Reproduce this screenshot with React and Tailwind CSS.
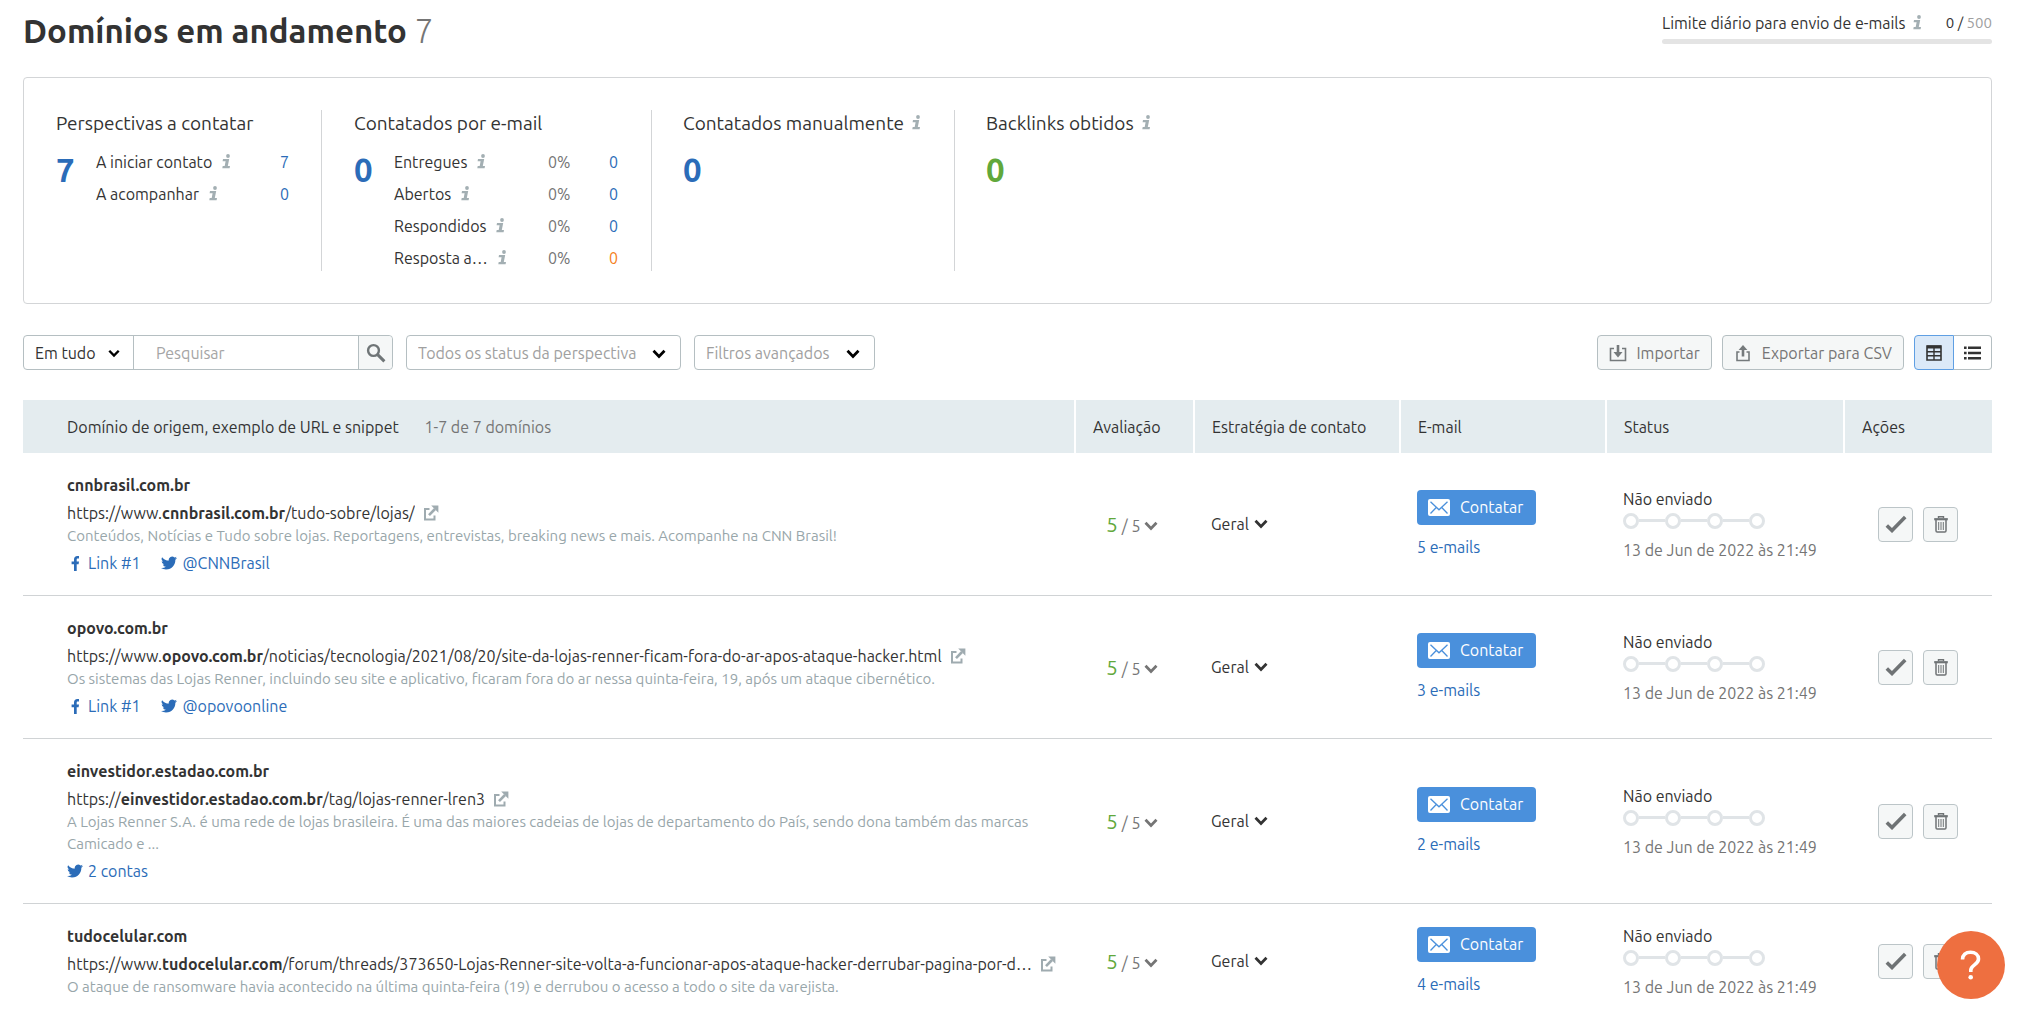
import React, { useState } from 'react';

const summaryContacts = [
    { label: 'A iniciar contato', value: 7 },
    { label: 'A acompanhar', value: 0 },
];

const summaryEmails = [
    { label: 'Entregues', percent: '0%', value: 0 },
    { label: 'Abertos', percent: '0%', value: 0 },
    { label: 'Respondidos', percent: '0%', value: 0 },
    { label: 'Resposta a…', percent: '0%', value: 0, warning: true },
];

const prospects = [
    {
        domain: 'cnnbrasil.com.br',
        prefix: 'https://www.',
        path: '/tudo-sobre/lojas/',
        snippet: 'Conteúdos, Notícias e Tudo sobre lojas. Reportagens, entrevistas, breaking news e mais. Acompanhe na CNN Brasil!',
        facebook: 'Link #1',
        twitter: '@CNNBrasil',
        emails: 5,
    },
    {
        domain: 'opovo.com.br',
        prefix: 'https://www.',
        path: '/noticias/tecnologia/2021/08/20/site-da-lojas-renner-ficam-fora-do-ar-apos-ataque-hacker.html',
        snippet: 'Os sistemas das Lojas Renner, incluindo seu site e aplicativo, ficaram fora do ar nessa quinta-feira, 19, após um ataque cibernético.',
        facebook: 'Link #1',
        twitter: '@opovoonline',
        emails: 3,
    },
    {
        domain: 'einvestidor.estadao.com.br',
        prefix: 'https://',
        path: '/tag/lojas-renner-lren3',
        snippet: 'A Lojas Renner S.A. é uma rede de lojas brasileira. É uma das maiores cadeias de lojas de departamento do País, sendo dona também das marcas Camicado e ...',
        twitter: '2 contas',
        emails: 2,
    },
    {
        domain: 'tudocelular.com',
        prefix: 'https://www.',
        path: '/forum/threads/373650-Lojas-Renner-site-volta-a-funcionar-apos-ataque-hacker-derrubar-pagina-por-d…',
        snippet: 'O ataque de ransomware havia acontecido na última quinta-feira (19) e derrubou o acesso a todo o site da varejista.',
        emails: 4,
    },
];

const InfoIcon = () => (
    <svg viewBox='0 0 9 16' className='h-4 w-[9px] shrink-0 fill-[#a3afb3]' aria-hidden='true'>
        <circle cx='6' cy='2' r='1.9' />
        <path d='M1 5h6.200L5.800 12H8l-.4 2.200H.3L.7 12h2l.9-4.800H.6z' />
    </svg>
);

const Chevron = ({ className }) => (
    <svg viewBox='0 0 14 10' className={className} fill='none' stroke='currentColor' strokeWidth='2.8' aria-hidden='true'>
        <path d='M1.5 1.8 7 7.4l5.5-5.6' />
    </svg>
);

const SearchIcon = () => (
    <svg viewBox='0 0 20 20' className='h-5 w-5' fill='none' stroke='#6f7577' aria-hidden='true'>
        <circle cx='7.5' cy='7.5' r='5.4' strokeWidth='2.4' />
        <path d='m11.6 11.6 6.8 6.8' strokeWidth='3' />
    </svg>
);

const ImportIcon = () => (
    <svg viewBox='0 0 18 18' className='h-[18px] w-[18px]' fill='none' stroke='#757a7c' strokeWidth='1.6' aria-hidden='true'>
        <path d='M5 4.5H1.5v12h15v-12H13' />
        <path d='M9 1v8' strokeWidth='2.6' />
        <path d='M4.5 8h9L9 13.4z' fill='#757a7c' stroke='none' />
    </svg>
);

const ExportIcon = () => (
    <svg viewBox='0 0 18 18' className='h-[18px] w-[18px]' fill='none' stroke='#757a7c' strokeWidth='1.6' aria-hidden='true'>
        <path d='M5.5 8H3v8.5h12V8h-2.5' />
        <path d='M9 12.5V5' strokeWidth='2.6' />
        <path d='M4.6 6h8.800L9 1z' fill='#757a7c' stroke='none' />
    </svg>
);

const TableIcon = () => (
    <svg viewBox='0 0 16 16' className='h-4 w-4' aria-hidden='true'>
        <path d='M1 1h14v14H1z' fill='none' stroke='#333' strokeWidth='1.6' />
        <path d='M1 2h14' stroke='#333' strokeWidth='3' />
        <path d='M1 6.8h14M1 10.8h14M8 3v12' stroke='#333' strokeWidth='1.4' />
    </svg>
);

const ListIcon = () => (
    <svg viewBox='0 0 17 14' className='h-[14px] w-[17px]' stroke='#333' strokeWidth='2.6' aria-hidden='true'>
        <path d='M0 1.8h2.6M4 1.8h13M0 7h2.6M4 7h13M0 12.2h2.6M4 12.2h13' />
    </svg>
);

const ExternalIcon = () => (
    <svg viewBox='0 0 16 16' className='h-4 w-4' fill='none' stroke='#9fabb0' strokeWidth='2' aria-hidden='true'>
        <path d='M6.5 4H2v10.5h9.5V10.5' />
        <path d='M6 10.2 12 4' strokeWidth='2.6' />
        <path d='M8.2.6h7.2v7.2z' fill='#9fabb0' stroke='none' />
    </svg>
);

const FacebookIcon = () => (
    <svg viewBox='0 0 16 16' className='h-4 w-4 fill-[#2b6cb8]' aria-hidden='true'>
        <path d='M7 16V9.200H4.600V6.600H7V4.700C7 2.300 8.300 1 10.400 1c.7 0 1.300 0 1.600.1v2.400h-1.200C9.900 3.500 9.700 4 9.700 4.800v1.800h2.300l-.4 2.600H9.700V16z' />
    </svg>
);

const TwitterIcon = () => (
    <svg viewBox='0 0 24 24' className='h-4 w-4 fill-[#2b6cb8]' aria-hidden='true'>
        <path d='M24 4.6a10 10 0 0 1-2.800.8 5 5 0 0 0 2.100-2.700 10 10 0 0 1-3.100 1.200 4.900 4.900 0 0 0-8.400 4.500A14 14 0 0 1 1.700 3.200a4.900 4.900 0 0 0 1.500 6.600 4.900 4.900 0 0 1-2.200-.6v.1a4.900 4.900 0 0 0 3.900 4.800 5 5 0 0 1-2.200.1 4.900 4.900 0 0 0 4.600 3.400A9.900 9.900 0 0 1 0 19.500a14 14 0 0 0 7.500 2.200c9.100 0 14-7.500 14-14v-.6A10 10 0 0 0 24 4.600z' />
    </svg>
);

const MailIcon = () => (
    <svg viewBox='0 0 22 17' className='h-[17px] w-[22px]' aria-hidden='true'>
        <rect width='22' height='17' rx='2' fill='#fff' />
        <path d='m2.500 2.800 8.500 8 8.500-8M2.500 14.500l5.500-5.800M19.500 14.500 14 8.700' fill='none' stroke='#4a90dc' strokeWidth='1.300' />
    </svg>
);

const CheckIcon = () => (
    <svg viewBox='0 0 22 18' className='h-[18px] w-[22px]' fill='none' stroke='#6f7375' strokeWidth='3.600' aria-hidden='true'>
        <path d='m1.800 10.500 5.200 5L20.200 2' />
    </svg>
);

const TrashIcon = () => (
    <svg viewBox='0 0 14 17' className='h-[17px] w-[14px]' fill='none' stroke='#6f7375' aria-hidden='true'>
        <path d='M.2 3.200h13.600' strokeWidth='2.200' />
        <path d='M4.500 2V.8h5V2' strokeWidth='1.400' />
        <path d='M2 4v10.800c0 .8.400 1.300 1.200 1.300h7.600c.8 0 1.200-.5 1.200-1.300V4' strokeWidth='1.500' />
        <path d='M4.700 6v8M7 6v8M9.300 6v8' strokeWidth='1' />
    </svg>
);

const HelpIcon = () => (
    <svg viewBox='0 0 22 30' className='h-[30px] w-[22px]' fill='none' stroke='#fff' strokeWidth='3.600' aria-hidden='true'>
        <path d='M2.500 9.500C2.500 5 5.800 2.300 10.500 2.300s8 2.700 8 6.700c0 5.600-7.700 6-7.700 11v2' />
        <circle cx='10.700' cy='27.200' r='2.300' fill='#fff' stroke='none' />
    </svg>
);

const StatusSteps = () => (
    <div className='mt-[2px] flex w-[142px] items-center'>
        {[0, 1, 2, 3].map((step) => (
            <React.Fragment key={step}>
                {step > 0 && <span className='h-[3px] flex-1 bg-[#e0e4e7]'></span>}
                <span className='h-4 w-4 rounded-full border-[3px] border-[#e0e4e7]'></span>
            </React.Fragment>
        ))}
    </div>
);

const Row = ({ item }) => (
    <tr className='border-b border-[#d0d3d5]'>
        <td className='py-5 pr-4 pl-[44px] align-top'>
            <div className='font-bold leading-6'>{item.domain}</div>
            <div className='mt-1 flex items-center gap-2 leading-6'>
                <span className='truncate'>{item.prefix}<b>{item.domain}</b>{item.path}</span>
                <a href='#' aria-label={`Abrir ${item.domain}`} className='shrink-0'><ExternalIcon /></a>
            </div>
            <p className='max-w-[980px] text-[15px] leading-[22px] text-[#98a6aa]'>{item.snippet}</p>
            {item.twitter && (
                <div className='mt-1 flex gap-[21px] leading-6 text-[#2b6cb8]'>
                    {item.facebook && <a href='#' className='flex items-center gap-[5px]'><FacebookIcon />{item.facebook}</a>}
                    <a href='#' className='flex items-center gap-[5px]'><TwitterIcon />{item.twitter}</a>
                </div>
            )}
        </td>
        <td>
            <button type='button' className='ml-[31px] flex items-center gap-1 text-[#757575]'>
                <span className='text-[21px] leading-6 text-[#61a83b]'>5</span>
                <span className='pt-[3px]'>/ 5</span>
                <Chevron className='mt-1 h-[10px] w-[14px]' />
            </button>
        </td>
        <td className='pl-[17px]'>
            <div className='relative w-[57px]'>
                <select aria-label='Estratégia de contato' className='w-full appearance-none bg-transparent leading-6'>
                    <option>Geral</option>
                </select>
                <Chevron className='pointer-events-none absolute top-[7px] right-0 h-[10px] w-[14px]' />
            </div>
        </td>
        <td className='pl-[17px]'>
            <button type='button' className='flex h-[35px] w-[119px] items-center gap-[10px] rounded bg-[#4a90dc] pl-[11px] text-white'>
                <MailIcon />Contatar
            </button>
            <a href='#' className='mt-[10px] block leading-6 text-[#2b6cb8]'>{item.emails} e-mails</a>
        </td>
        <td className='pl-[17px]'>
            <div className='leading-6'>Não enviado</div>
            <StatusSteps />
            <div className='mt-[9px] leading-6 text-[#757575]'>13 de Jun de 2022 às 21:49</div>
        </td>
        <td className='pl-[34px]'>
            <div className='flex gap-[10px]'>
                <button type='button' aria-label='Concluir' className='flex h-[35px] w-[35px] items-center justify-center rounded border border-[#bcc5c8] bg-[#f5f7f7]'><CheckIcon /></button>
                <button type='button' aria-label='Excluir' className='flex h-[35px] w-[35px] items-center justify-center rounded border border-[#bcc5c8] bg-[#f5f7f7]'><TrashIcon /></button>
            </div>
        </td>
    </tr>
);

export const App = () => {

    const [search, setSearch] = useState('');
    const [view, setView] = useState('table');

    return (
        <div className="bg-white pr-7 pl-[23px] font-['Ubuntu','Noto_Sans',sans-serif] text-[16px] text-[#333]">
            <header className='flex items-start justify-between'>
                <h1 className='pt-[11px] text-[33px] leading-10 font-bold'>
                    Domínios em andamento <span className='font-light text-[#757575]'>7</span>
                </h1>
                <div className='w-[330px] pt-[11px]'>
                    <div className='flex items-center leading-6'>
                        <span>Limite diário para envio de e-mails</span>
                        <span className='ml-2'><InfoIcon /></span>
                        <span className='ml-auto text-[15px]'>0 / <span className='text-[#a0a0a0]'>500</span></span>
                    </div>
                    <div className='mt-1 h-[5px] rounded-full bg-[#e4e4e4]'></div>
                </div>
            </header>

            <section className='mt-[26px] flex rounded border border-[#d3d5d7] py-8'>
                <div className='h-[161px] w-[298px] border-r border-[#d3d5d7] pl-8'>
                    <h2 className='text-[19px] leading-[26px]'>Perspectivas a contatar</h2>
                    <div className='mt-[10px] flex'>
                        <a href='#' className='w-10 pt-1 text-[33px] leading-10 font-bold text-[#2b6cb8]'>7</a>
                        <ul className='w-[193px]'>
                            {summaryContacts.map((item) => (
                                <li key={item.label} className='flex h-8 items-center gap-[10px]'>
                                    <span>{item.label}</span>
                                    <InfoIcon />
                                    <a href='#' className='ml-auto text-[#2b6cb8]'>{item.value}</a>
                                </li>
                            ))}
                        </ul>
                    </div>
                </div>
                <div className='h-[161px] w-[330px] border-r border-[#d3d5d7] pl-8'>
                    <h2 className='text-[19px] leading-[26px]'>Contatados por e-mail</h2>
                    <div className='mt-[10px] flex'>
                        <a href='#' className='w-10 pt-1 text-[33px] leading-10 font-bold text-[#2b6cb8]'>0</a>
                        <ul className='w-[224px]'>
                            {summaryEmails.map((item) => (
                                <li key={item.label} className='flex h-8 items-center'>
                                    <span className='flex flex-1 items-center gap-[10px]'>{item.label}<InfoIcon /></span>
                                    <span className='w-[61px] text-[#757575]'>{item.percent}</span>
                                    <a href='#' className={item.warning ? 'text-[#f58020]' : 'text-[#2b6cb8]'}>{item.value}</a>
                                </li>
                            ))}
                        </ul>
                    </div>
                </div>
                <div className='h-[161px] w-[303px] border-r border-[#d3d5d7] pl-[31px]'>
                    <h2 className='flex items-center gap-2 text-[19px] leading-[26px]'>Contatados manualmente <InfoIcon /></h2>
                    <a href='#' className='mt-[14px] block text-[33px] leading-10 font-bold text-[#2b6cb8]'>0</a>
                </div>
                <div className='pl-[31px]'>
                    <h2 className='flex items-center gap-2 text-[19px] leading-[26px]'>Backlinks obtidos <InfoIcon /></h2>
                    <a href='#' className='mt-[14px] block text-[33px] leading-10 font-bold text-[#61a83b]'>0</a>
                </div>
            </section>

            <div className='mt-[31px] flex h-[35px] items-stretch'>
                <div className='flex w-[370px] rounded border border-[#b5bfc2]'>
                    <div className='relative w-[110px] border-r border-[#b5bfc2]'>
                        <select aria-label='Pesquisar em' className='h-full w-full appearance-none bg-transparent pl-[11px]'>
                            <option>Em tudo</option>
                        </select>
                        <Chevron className='pointer-events-none absolute top-[13px] right-[13px] h-[9px] w-[12px] text-black' />
                    </div>
                    <input
                        type='text'
                        aria-label='Pesquisar'
                        placeholder='Pesquisar'
                        value={search}
                        onChange={(e) => setSearch(e.target.value)}
                        className='min-w-0 flex-1 pl-[22px] placeholder:text-[#a5a5a5]'
                    />
                    <button type='button' aria-label='Buscar' className='flex w-[34px] items-center justify-center rounded-r border-l border-[#b5bfc2] bg-[#f5f7f7]'><SearchIcon /></button>
                </div>
                <div className='relative ml-[13px] w-[275px]'>
                    <select aria-label='Status da perspectiva' className='h-full w-full appearance-none rounded border border-[#b5bfc2] bg-white pl-[11px] text-[#a0a0a0]'>
                        <option>Todos os status da perspectiva</option>
                    </select>
                    <Chevron className='pointer-events-none absolute top-[14px] right-[15px] h-[10px] w-[14px] text-black' />
                </div>
                <div className='relative ml-[13px] w-[181px]'>
                    <select aria-label='Filtros avançados' className='h-full w-full appearance-none rounded border border-[#b5bfc2] bg-white pl-[11px] text-[#a0a0a0]'>
                        <option>Filtros avançados</option>
                    </select>
                    <Chevron className='pointer-events-none absolute top-[14px] right-[15px] h-[10px] w-[14px] text-black' />
                </div>
                <button type='button' className='ml-auto flex items-center gap-[10px] rounded border border-[#b5bfc2] bg-[#f5f7f7] px-[11px] text-[#757575]'>
                    <ImportIcon />Importar
                </button>
                <button type='button' className='ml-[10px] flex items-center gap-[10px] rounded border border-[#b5bfc2] bg-[#f5f7f7] px-[11px] text-[#757575]'>
                    <ExportIcon />Exportar para CSV
                </button>
                <button type='button' aria-label='Tabela' aria-pressed={view === 'table'} onClick={() => setView('table')} className='ml-[10px] flex w-10 items-center justify-center rounded-l border border-[#5f9fe3] bg-[#dbe9f8]'><TableIcon /></button>
                <button type='button' aria-label='Lista' aria-pressed={view === 'list'} onClick={() => setView('list')} className='flex w-[38px] items-center justify-center rounded-r border border-l-0 border-[#b5bfc2] bg-white'><ListIcon /></button>
            </div>

            <table className='mt-[30px] w-full table-fixed text-left'>
                <thead>
                    <tr className='h-[53px] bg-[#e4ecef]'>
                        <th className='border-r-2 border-white pl-[44px] font-normal'>
                            Domínio de origem, exemplo de URL e snippet <span className='ml-[22px] text-[#757575]'>1-7 de 7 domínios</span>
                        </th>
                        <th className='w-[119px] border-r-2 border-white pl-[17px] font-normal'>Avaliação</th>
                        <th className='w-[206px] border-r-2 border-white pl-[17px] font-normal'>Estratégia de contato</th>
                        <th className='w-[206px] border-r-2 border-white pl-[17px] font-normal'>E-mail</th>
                        <th className='w-[238px] border-r-2 border-white pl-[17px] font-normal'>Status</th>
                        <th className='w-[148px] pl-[17px] font-normal'>Ações</th>
                    </tr>
                </thead>
                <tbody>
                    {prospects.map((item) => <Row key={item.domain} item={item} />)}
                </tbody>
            </table>

            <button type='button' aria-label='Ajuda' className='fixed right-[15px] bottom-[15px] flex h-[68px] w-[68px] items-center justify-center rounded-full bg-[#ee6f40]'>
                <HelpIcon />
            </button>
        </div>
    );
};

export default App;
